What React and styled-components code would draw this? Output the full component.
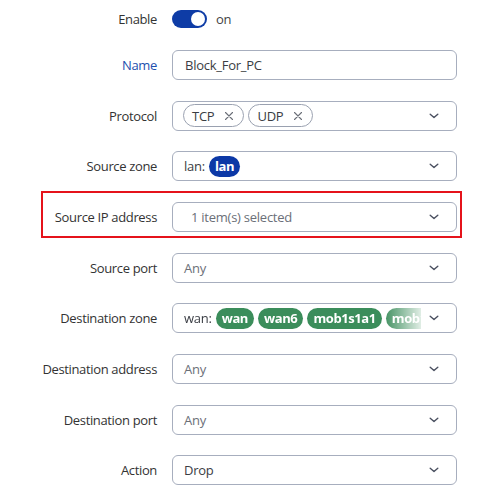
import styled, { createGlobalStyle } from "styled-components";

const GlobalStyle = createGlobalStyle`
  body {
    margin: 0;
    background: #fff;
    font-family: "Open Sans", "Noto Sans", sans-serif;
    font-size: 13px;
    letter-spacing: -0.25px;
    color: #333;
  }
`;

export default function App() {
  return (
    <Form>
      <GlobalStyle />
      <ToggleRow>
        <Label>Enable</Label>
        <ToggleWrap>
          <Track>
            <Knob />
          </Track>
          <span>on</span>
        </ToggleWrap>
      </ToggleRow>

      <Row>
        <Label $accent>Name</Label>
        <Input>
          <Value>Block_For_PC</Value>
        </Input>
      </Row>

      <Row>
        <Label>Protocol</Label>
        <Select>
          <Tags>
            <OutlineTag>
              TCP <Cross />
            </OutlineTag>
            <OutlineTag>
              UDP <Cross />
            </OutlineTag>
          </Tags>
          <Chevron />
        </Select>
      </Row>

      <Row>
        <Label>Source zone</Label>
        <Select>
          <Tags>
            <Prefix>lan:</Prefix>
            <Pill color="#0c38a6">lan</Pill>
          </Tags>
          <Chevron />
        </Select>
      </Row>

      <Row $highlight>
        <Label>Source IP address</Label>
        <Select>
          <Value $muted $indent>
            1 item(s) selected
          </Value>
          <Chevron />
        </Select>
      </Row>

      <Row>
        <Label>Source port</Label>
        <Select>
          <Value $muted>Any</Value>
          <Chevron />
        </Select>
      </Row>

      <Row>
        <Label>Destination zone</Label>
        <Select>
          <Tags $fade>
            <Prefix>wan:</Prefix>
            <Pill color="#3b8d5b">wan</Pill>
            <Pill color="#3b8d5b">wan6</Pill>
            <Pill color="#3b8d5b">mob1s1a1</Pill>
            <Pill color="#3b8d5b">mob1s1a2</Pill>
          </Tags>
          <Chevron />
        </Select>
      </Row>

      <Row>
        <Label>Destination address</Label>
        <Select>
          <Value $muted>Any</Value>
          <Chevron />
        </Select>
      </Row>

      <Row>
        <Label>Destination port</Label>
        <Select>
          <Value $muted>Any</Value>
          <Chevron />
        </Select>
      </Row>

      <Row>
        <Label>Action</Label>
        <Select>
          <Value>Drop</Value>
          <Chevron />
        </Select>
      </Row>
    </Form>
  );
}

function Chevron() {
  return (
    <Icon viewBox="0 0 10 6" width="10" height="6">
      <path
        d="M1.2 1.2 L5 4.6 L8.8 1.2"
        fill="none"
        stroke="#4a5060"
        strokeWidth="1.4"
        strokeLinecap="round"
        strokeLinejoin="round"
      />
    </Icon>
  );
}

function Cross() {
  return (
    <Icon viewBox="0 0 10 10" width="10" height="10">
      <path
        d="M1.5 1.5 L8.5 8.5 M8.5 1.5 L1.5 8.5"
        fill="none"
        stroke="#6b6f78"
        strokeWidth="1.1"
        strokeLinecap="round"
      />
    </Icon>
  );
}

const Form = styled.div`
  width: 489px;
  height: 500px;
  padding-top: 8.7px;
  box-sizing: border-box;
  display: flex;
  flex-direction: column;
  gap: 20.7px;
`;

const Row = styled.div`
  position: relative;
  margin-left: 41px;
  width: 421px;
  height: 30px;
  box-sizing: border-box;
  padding-right: 5px;
  display: grid;
  grid-template-columns: 116px 285px;
  column-gap: 15px;
  align-items: center;

  ${({ $highlight }) =>
    $highlight &&
    `
    &::before {
      content: "";
      position: absolute;
      left: 0;
      right: 0;
      top: -11px;
      bottom: -6px;
      border: 2px solid #e5131b;
      pointer-events: none;
    }
  `}
`;

const ToggleRow = styled(Row)`
  height: 20.6px;
`;

const Label = styled.div`
  text-align: right;
  white-space: nowrap;
  letter-spacing: -0.35px;
  color: ${({ $accent }) => ($accent ? "#1d4fae" : "#333")};
`;

const ToggleWrap = styled.div`
  display: flex;
  align-items: center;
  gap: 9px;
  color: #444;
`;

const Track = styled.div`
  width: 35px;
  height: 18px;
  border-radius: 9px;
  background: #0e3ca6;
  position: relative;
`;

const Knob = styled.div`
  position: absolute;
  right: 2px;
  top: 2px;
  width: 14px;
  height: 14px;
  border-radius: 50%;
  background: #fff;
`;

const Input = styled.div`
  height: 30px;
  box-sizing: border-box;
  border: 1px solid #a7aebe;
  border-radius: 6px;
  display: flex;
  align-items: center;
  padding: 0 12px 0 11px;
  overflow: hidden;
`;

const Select = styled(Input)`
  justify-content: space-between;
  gap: 8px;
  padding-left: 10px;
  padding-right: 17px;
`;

const Value = styled.span`
  color: ${({ $muted }) => ($muted ? "#6b6f78" : "#3a3d44")};
  padding-left: ${({ $indent }) => ($indent ? "8px" : "1px")};
  white-space: nowrap;
`;

const Tags = styled.div`
  display: flex;
  align-items: center;
  gap: 4px;
  min-width: 0;
  flex: 1;
  overflow: hidden;
  white-space: nowrap;
  ${({ $fade }) =>
    $fade &&
    `
    -webkit-mask-image: linear-gradient(to right, #000 0, #000 200px, transparent 245px);
    mask-image: linear-gradient(to right, #000 0, #000 200px, transparent 245px);
  `}
`;

const Prefix = styled.span`
  color: #3a3d44;
  padding-left: 1px;
`;

const OutlineTag = styled.span`
  display: inline-flex;
  align-items: center;
  gap: 10px;
  height: 23px;
  box-sizing: border-box;
  padding: 0 9px 0 8px;
  border: 1px solid #9aa1b0;
  border-radius: 12px;
  color: #3a3d44;
  flex-shrink: 0;
`;

const Pill = styled.span`
  display: inline-flex;
  align-items: center;
  height: 21px;
  padding: 0 6px;
  border-radius: 11px;
  background: ${({ color }) => color};
  color: #fff;
  font-weight: 700;
  font-size: 13px;
  letter-spacing: -0.4px;
  flex-shrink: 0;
`;

const Icon = styled.svg`
  flex-shrink: 0;
`;
